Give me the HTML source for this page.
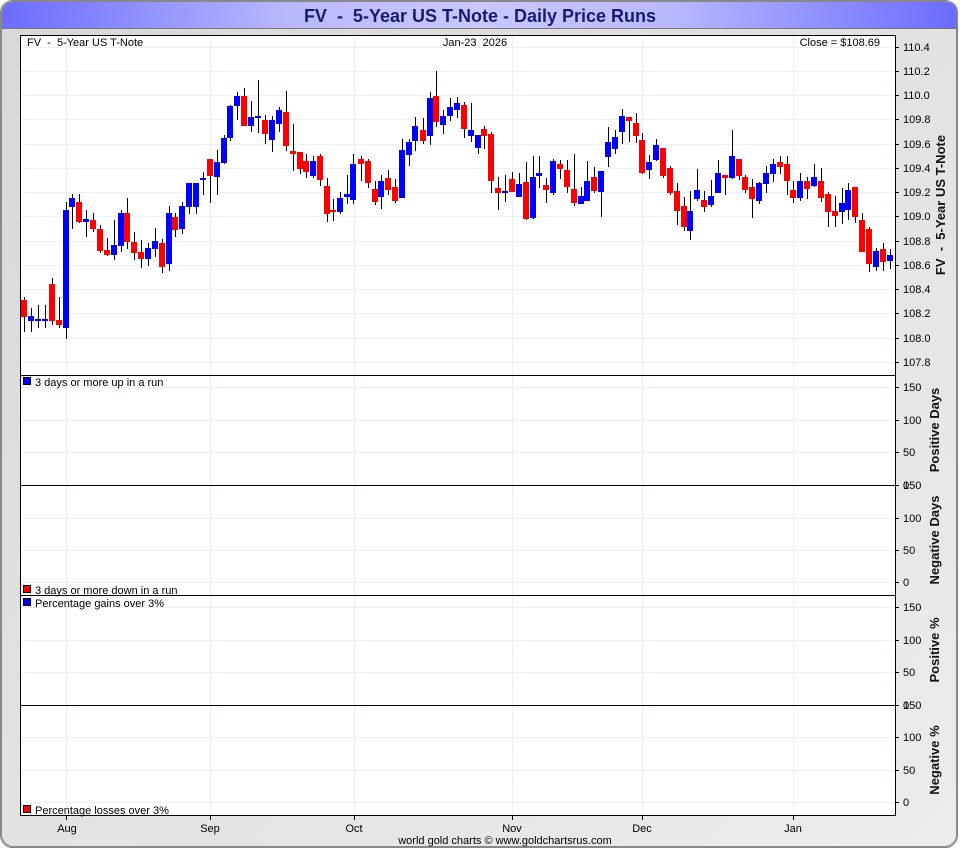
<!DOCTYPE html>
<html><head><meta charset="utf-8"><style>
html,body{margin:0;padding:0;background:#fff;}
body{width:960px;height:850px;overflow:hidden;font-family:"Liberation Sans",sans-serif;}
svg text{white-space:pre;}
</style></head><body>
<svg width="960" height="850" viewBox="0 0 960 850" xmlns="http://www.w3.org/2000/svg" font-family="Liberation Sans, sans-serif" xml:space="preserve">
<defs>
<linearGradient id="tb" x1="0" x2="1" y1="0" y2="0">
<stop offset="0" stop-color="#6b6bff"/><stop offset="0.3" stop-color="#b8b8ff"/><stop offset="0.5" stop-color="#c8c8ff"/><stop offset="0.7" stop-color="#b8b8ff"/><stop offset="1" stop-color="#6b6bff"/>
</linearGradient>
<linearGradient id="bg" x1="0" x2="1" y1="0" y2="1">
<stop offset="0" stop-color="#d8d8d8"/><stop offset="1" stop-color="#ececec"/>
</linearGradient>
</defs>
<rect x="1" y="1" width="956" height="846" rx="12" fill="url(#bg)" stroke="#555" stroke-width="2"/>
<rect x="1" y="1" width="956" height="846" rx="12" fill="none" stroke="#bbb" stroke-width="1"/>
<path d="M2 28V14Q2 2 14 2H946Q957 2 957 14V28Z" fill="url(#tb)"/>
<line x1="2" y1="28.5" x2="957" y2="28.5" stroke="#777"/>
<text x="480" y="22" text-anchor="middle" font-size="18" font-weight="bold" fill="#1a1a6e">FV  -  5-Year US T-Note - Daily Price Runs</text>
<rect x="20" y="35" width="875" height="780" fill="#fff"/>
<g stroke="#e6f0fa" stroke-width="1">
<path d="M20 47.5H895M20 71.5H895M20 95.5H895M20 119.5H895M20 144.5H895M20 168.5H895M20 192.5H895M20 216.5H895M20 241.5H895M20 265.5H895M20 289.5H895M20 313.5H895M20 338.5H895M20 362.5H895"/>
<path d="M20 387.5H895M20 420.5H895M20 452.5H895M20 518.5H895M20 550.5H895M20 582.5H895M20 607.5H895M20 640.5H895M20 672.5H895M20 737.5H895M20 770.5H895M20 802.5H895"/>
<path d="M66.5 35V815M210.5 35V815M354.5 35V815M512.5 35V815M642.5 35V815M793.5 35V815"/>
</g>
<g stroke="#000" stroke-width="1">
<path d="M24.5 297V332M31.5 308V332M38.5 305V328M45.5 305V328M52.5 278V325M59.5 297V328M66.5 202V339M72.5 194V229M79.5 194V223M86.5 210V237M93.5 213V232M100.5 225V253M107.5 238V256M114.5 220V260M121.5 210V252M127.5 198V249M134.5 232V260M141.5 240V268M148.5 243V266M155.5 228V257M162.5 239V273M169.5 206V271M175.5 213V237M182.5 202V234M189.5 183V214M196.5 183V214M203.5 172V195M210.5 159V203M217.5 150V195M224.5 135V164M230.5 105V141M237.5 92V120M244.5 88V126M251.5 101V132M258.5 80V133M265.5 115V144M272.5 116V152M279.5 107V132M286.5 91V151M293.5 124V171M300.5 152V174M306.5 154V178M313.5 156V178M320.5 154V186M327.5 178V222M333.5 199V221M340.5 192V214M347.5 175V204M353.5 154V204M361.5 156V181M368.5 159V188M375.5 181V205M381.5 175V209M388.5 170V195M395.5 179V203M402.5 139V198M409.5 139V166M415.5 117V151M423.5 118V144M430.5 92V145M436.5 71V127M443.5 110V134M450.5 98V121M457.5 97V118M464.5 102V138M471.5 103V142M478.5 135V154M484.5 126V149M491.5 132V193M498.5 177V210M505.5 175V202M512.5 172V192M519.5 173V197M526.5 162V220M533.5 156V219M539.5 156V188M546.5 178V203M553.5 159V195M560.5 160V179M567.5 160V193M574.5 154V206M581.5 187V204M587.5 161V201M594.5 167V193M601.5 171V217M608.5 127V167M615.5 130V154M622.5 109V144M629.5 117V142M636.5 113V143M642.5 133V174M649.5 155V179M656.5 139V161M663.5 148V178M670.5 166V195M677.5 183V225M684.5 197V231M690.5 191V240M697.5 169V201M704.5 191V212M711.5 180V207M718.5 160V193M725.5 175V195M732.5 130V179M739.5 159V180M745.5 175V193M752.5 179V218M759.5 182V204M766.5 166V193M773.5 159V182M780.5 156V174M787.5 156V195M793.5 181V203M800.5 173V201M807.5 177V199M814.5 164V187M821.5 168V202M828.5 192V227M835.5 196V227M842.5 188V224M848.5 183V220M855.5 187V223M862.5 213V252M869.5 227V272M876.5 248V271M883.5 243V271M890.5 249V269"/>
</g>
<path fill="#ff0000" d="M21 300h6v17h-6zM49 284h6v37h-6zM56 320h6v5h-6zM76 202h6v20h-6zM90 220h6v9h-6zM97 229h6v22h-6zM104 250h6v5h-6zM124 213h6v29h-6zM131 242h6v11h-6zM138 252h6v7h-6zM159 243h6v24h-6zM172 217h6v13h-6zM207 159h6v17h-6zM241 96h6v30h-6zM262 120h6v14h-6zM283 112h6v34h-6zM290 151h6v3h-6zM297 152h6v17h-6zM303 161h6v11h-6zM317 156h6v24h-6zM324 186h6v28h-6zM330 210h6v2h-6zM358 159h6v5h-6zM365 161h6v22h-6zM372 189h6v13h-6zM385 178h6v12h-6zM392 187h6v14h-6zM420 130h6v11h-6zM433 96h6v26h-6zM461 105h6v24h-6zM481 129h6v7h-6zM488 134h6v47h-6zM495 188h6v5h-6zM509 179h6v13h-6zM523 182h6v37h-6zM543 185h6v5h-6zM557 164h6v5h-6zM564 170h6v17h-6zM571 189h6v14h-6zM591 177h6v14h-6zM626 117h6v4h-6zM633 123h6v13h-6zM639 140h6v33h-6zM660 148h6v28h-6zM667 168h6v25h-6zM674 191h6v20h-6zM681 206h6v21h-6zM701 200h6v7h-6zM722 175h6v3h-6zM736 159h6v17h-6zM742 177h6v13h-6zM749 187h6v12h-6zM777 162h6v5h-6zM784 164h6v17h-6zM790 190h6v8h-6zM804 181h6v8h-6zM818 181h6v17h-6zM825 194h6v18h-6zM832 211h6v5h-6zM852 187h6v30h-6zM859 220h6v32h-6zM866 229h6v35h-6zM880 249h6v13h-6z"/>
<path fill="#0000ff" d="M28 316h6v5h-6zM35 319h6v2h-6zM42 319h6v2h-6zM63 210h6v118h-6zM69 198h6v9h-6zM83 219h6v3h-6zM111 245h6v10h-6zM118 213h6v33h-6zM145 248h6v11h-6zM152 241h6v8h-6zM166 213h6v51h-6zM179 206h6v23h-6zM186 183h6v24h-6zM193 183h6v24h-6zM200 178h6v2h-6zM214 162h6v15h-6zM221 138h6v25h-6zM227 106h6v32h-6zM234 96h6v10h-6zM248 117h6v9h-6zM255 116h6v2h-6zM269 120h6v20h-6zM276 110h6v14h-6zM310 161h6v15h-6zM337 198h6v14h-6zM344 194h6v3h-6zM350 164h6v36h-6zM378 181h6v16h-6zM399 150h6v48h-6zM406 142h6v13h-6zM412 126h6v15h-6zM427 98h6v38h-6zM440 116h6v9h-6zM447 107h6v9h-6zM454 103h6v7h-6zM468 130h6v6h-6zM475 135h6v13h-6zM502 191h6v2h-6zM516 184h6v13h-6zM530 177h6v41h-6zM536 173h6v3h-6zM550 161h6v32h-6zM578 196h6v8h-6zM584 181h6v20h-6zM598 171h6v21h-6zM605 142h6v15h-6zM612 137h6v12h-6zM619 116h6v16h-6zM646 162h6v8h-6zM653 145h6v15h-6zM687 211h6v20h-6zM694 190h6v9h-6zM708 196h6v9h-6zM715 173h6v20h-6zM729 156h6v22h-6zM756 183h6v18h-6zM763 173h6v11h-6zM770 164h6v10h-6zM797 181h6v17h-6zM811 177h6v9h-6zM839 203h6v9h-6zM845 190h6v20h-6zM873 251h6v16h-6zM887 255h6v6h-6z"/>
<g fill="none" stroke="#000" stroke-width="1">
<rect x="20.5" y="35.5" width="875" height="780"/>
<path d="M20 375.5H895M20 485.5H895M20 595.5H895M20 705.5H895"/>
<path d="M895 47.5h4M895 71.5h4M895 95.5h4M895 119.5h4M895 144.5h4M895 168.5h4M895 192.5h4M895 216.5h4M895 241.5h4M895 265.5h4M895 289.5h4M895 313.5h4M895 338.5h4M895 362.5h4M895 387.5h4M895 420.5h4M895 452.5h4M895 485.5h4M895 518.5h4M895 550.5h4M895 582.5h4M895 607.5h4M895 640.5h4M895 672.5h4M895 705.5h4M895 737.5h4M895 770.5h4M895 802.5h4"/>
<path d="M66.5 815v5M210.5 815v5M354.5 815v5M512.5 815v5M642.5 815v5M793.5 815v5"/>
</g>
<g font-size="11" fill="#000">
<text x="27" y="46">FV  -  5-Year US T-Note</text>
<text x="475" y="46" text-anchor="middle">Jan-23  2026</text>
<text x="880" y="46" text-anchor="end">Close = $108.69</text>
<g>
<text x="903" y="51">110.4</text><text x="903" y="75">110.2</text><text x="903" y="99">110.0</text><text x="903" y="123">109.8</text><text x="903" y="148">109.6</text><text x="903" y="172">109.4</text><text x="903" y="196">109.2</text><text x="903" y="220">109.0</text><text x="903" y="245">108.8</text><text x="903" y="269">108.6</text><text x="903" y="293">108.4</text><text x="903" y="317">108.2</text><text x="903" y="342">108.0</text><text x="903" y="366">107.8</text>
<text x="903" y="391">150</text><text x="903" y="424">100</text><text x="903" y="456">50</text><text x="903" y="489">0</text>
<text x="903" y="489">150</text><text x="903" y="522">100</text><text x="903" y="554">50</text><text x="903" y="586">0</text>
<text x="903" y="611">150</text><text x="903" y="644">100</text><text x="903" y="676">50</text><text x="903" y="709">0</text>
<text x="903" y="709">150</text><text x="903" y="741">100</text><text x="903" y="774">50</text><text x="903" y="806">0</text>
</g>
<text x="67" y="832" text-anchor="middle">Aug</text><text x="210" y="832" text-anchor="middle">Sep</text><text x="354" y="832" text-anchor="middle">Oct</text><text x="512" y="832" text-anchor="middle">Nov</text><text x="642" y="832" text-anchor="middle">Dec</text><text x="793" y="832" text-anchor="middle">Jan</text>
<text x="505" y="844" text-anchor="middle">world gold charts © www.goldchartsrus.com</text>
<rect x="23.5" y="377.5" width="7" height="7" fill="#0000ff" stroke="#000"/><text x="35" y="386">3 days or more up in a run</text>
<rect x="23.5" y="585.5" width="7" height="7" fill="#ff0000" stroke="#000"/><text x="35" y="594">3 days or more down in a run</text>
<rect x="23.5" y="598.5" width="7" height="7" fill="#0000ff" stroke="#000"/><text x="35" y="607">Percentage gains over 3%</text>
<rect x="23.5" y="805.5" width="7" height="7" fill="#ff0000" stroke="#000"/><text x="35" y="814">Percentage losses over 3%</text>
</g>
<g font-size="13" font-weight="bold" fill="#111" text-anchor="middle">
<text transform="translate(945,205) rotate(-90)">FV  -  5-Year US T-Note</text>
<text transform="translate(939,430) rotate(-90)">Positive Days</text>
<text transform="translate(939,540) rotate(-90)">Negative Days</text>
<text transform="translate(939,650) rotate(-90)">Positive %</text>
<text transform="translate(939,760) rotate(-90)">Negative %</text>
</g>
</svg>
</body></html>
